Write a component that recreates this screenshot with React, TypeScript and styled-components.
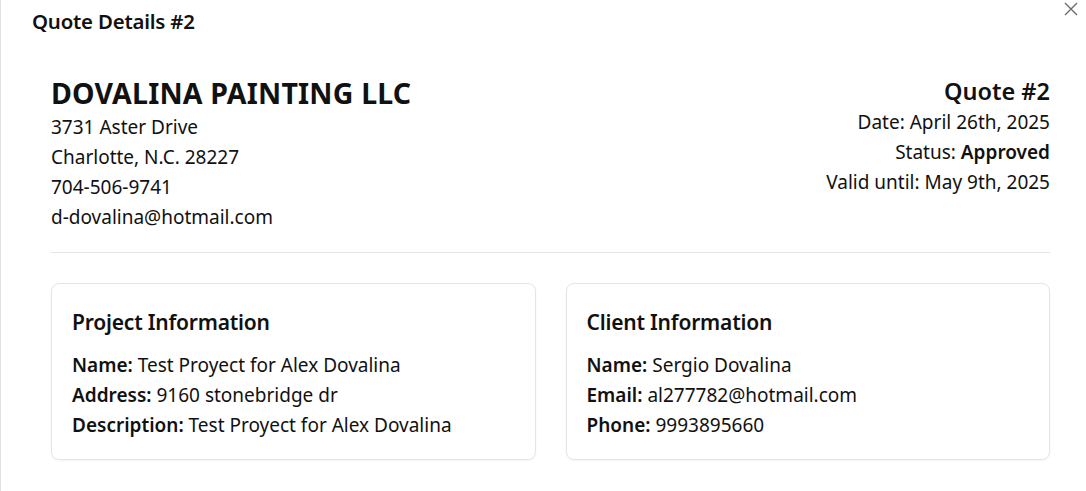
import React from 'react'
import styled, { createGlobalStyle } from 'styled-components'

const GlobalStyle = createGlobalStyle`
  html, body {
    margin: 0;
    padding: 0;
    background: #ffffff;
  }
  body {
    font-family: 'Noto Sans', 'Open Sans', Arial, sans-serif;
    color: #111111;
  }
`

interface Field {
  label: string
  value: string
}

const projectFields: Field[] = [
  { label: 'Name:', value: 'Test Proyect for Alex Dovalina' },
  { label: 'Address:', value: '9160 stonebridge dr' },
  { label: 'Description:', value: 'Test Proyect for Alex Dovalina' }
]

const clientFields: Field[] = [
  { label: 'Name:', value: 'Sergio Dovalina' },
  { label: 'Email:', value: 'al277782@hotmail.com' },
  { label: 'Phone:', value: '9993895660' }
]

const Dialog = styled.div`
  position: relative;
  width: 1086px;
  height: 491px;
  box-sizing: border-box;
  border-left: 1px solid #e2e2e2;
  background: #fff;
  overflow: hidden;
`

const DialogHeader = styled.div`
  padding: 7px 31px;
  height: 28px;
`

const DialogTitle = styled.h2`
  margin: 0;
  font-size: 20.4px;
  line-height: 28px;
  font-weight: 600;
  letter-spacing: -0.2px;
`

const CloseButton = styled.button`
  position: absolute;
  top: 2px;
  left: 1063px;
  padding: 0;
  border: 0;
  background: none;
  width: 14px;
  height: 14px;
  display: flex;
  align-items: center;
  justify-content: center;
  cursor: pointer;
`

const Body = styled.div`
  padding: 33px 36px 0 50px;
`

const TopRow = styled.div`
  display: flex;
  justify-content: space-between;
  align-items: flex-start;
  padding-bottom: 20px;
  border-bottom: 1px solid #e5e5e5;
`

const Company = styled.div`
  display: flex;
  flex-direction: column;
`

const CompanyName = styled.h1`
  margin: 0;
  font-size: 28.5px;
  line-height: 37px;
  font-weight: 700;
  letter-spacing: 0.2px;
`

const Line = styled.div<{ $align?: 'left' | 'right' }>`
  font-size: 19px;
  line-height: 30px;
  text-align: ${p => p.$align ?? 'left'};
`

const QuoteMeta = styled.div`
  display: flex;
  flex-direction: column;
  align-items: flex-end;
`

const QuoteNumber = styled.h2`
  margin: 0;
  font-size: 23.5px;
  line-height: 32px;
  font-weight: 600;
`

const Cards = styled.div`
  display: grid;
  grid-template-columns: 1fr 1fr;
  gap: 30px;
  margin-top: 30px;
`

const Card = styled.section`
  border: 1px solid #e5e5e5;
  border-radius: 8px;
  box-shadow: 0 1px 2px rgba(0, 0, 0, 0.05);
  padding: 24px 20px 19px;
`

const CardTitle = styled.h3`
  margin: 0 0 14px;
  font-size: 21px;
  line-height: 28px;
  font-weight: 600;
  letter-spacing: -0.2px;
`

const Label = styled.strong`
  font-weight: 600;
`

function InfoCard({ title, fields }: { title: string; fields: Field[] }) {
  return (
    <Card>
      <CardTitle>{title}</CardTitle>
      {fields.map(f => (
        <Line key={f.label}>
          <Label>{f.label}</Label> {f.value}
        </Line>
      ))}
    </Card>
  )
}

export default function App() {
  return (
    <>
      <GlobalStyle />
      <Dialog>
        <DialogHeader>
          <DialogTitle>Quote Details #2</DialogTitle>
        </DialogHeader>
        <CloseButton aria-label="Close">
          <svg width="14" height="14" viewBox="0 0 14 14">
            <path d="M1 1 L13 13 M13 1 L1 13" stroke="#6b6b6b" strokeWidth="1.4" fill="none" />
          </svg>
        </CloseButton>
        <Body>
          <TopRow>
            <Company>
              <CompanyName>DOVALINA PAINTING LLC</CompanyName>
              <Line>3731 Aster Drive</Line>
              <Line>Charlotte, N.C. 28227</Line>
              <Line>704-506-9741</Line>
              <Line>d-dovalina@hotmail.com</Line>
            </Company>
            <QuoteMeta>
              <QuoteNumber>Quote #2</QuoteNumber>
              <Line $align="right">Date: April 26th, 2025</Line>
              <Line $align="right">
                Status: <Label>Approved</Label>
              </Line>
              <Line $align="right">Valid until: May 9th, 2025</Line>
            </QuoteMeta>
          </TopRow>
          <Cards>
            <InfoCard title="Project Information" fields={projectFields} />
            <InfoCard title="Client Information" fields={clientFields} />
          </Cards>
        </Body>
      </Dialog>
    </>
  )
}
